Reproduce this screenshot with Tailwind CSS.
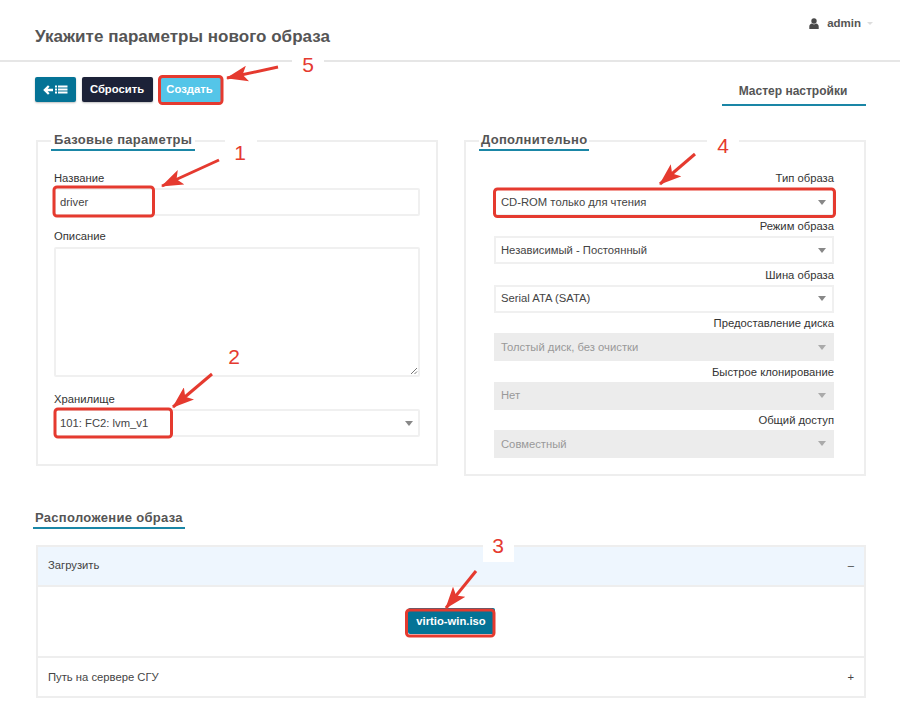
<!doctype html>
<html lang="ru">
<head>
<meta charset="UTF-8">
<title>Новый образ</title>
<script src="https://cdn.jsdelivr.net/npm/@tailwindcss/browser@4"></script>
</head>
<body class="relative h-[717px] w-[900px] overflow-hidden bg-white font-['Liberation_Sans',Arial,sans-serif] text-[11.25px] text-[#444]">
  <!-- header -->
  <header class="flex h-[62px] items-start justify-between border-b-2 border-[#e6e6e6] pl-[35px] pr-[27px]">
    <h1 class="mt-[26px] text-[17px] leading-[21px] font-bold tracking-[0.03px] text-[#555]">Укажите параметры нового образа</h1>
    <div class="mt-[16px] flex items-center text-[11.5px] leading-[14px] font-bold text-[#555]">
      <svg class="mr-[8px] h-[11px] w-[10px]" viewBox="0 0 10 11" fill="#4a4a4a"><circle cx="5" cy="3" r="2.7"/><path d="M0.3 11V8.6C0.3 6.9 1.6 5.8 3 5.6L5 6.6 7 5.6C8.4 5.8 9.7 6.9 9.7 8.6V11z"/></svg>
      admin
      <svg class="ml-[6px] h-[3px] w-[6px]" viewBox="0 0 6 3" fill="#ddd"><path d="M0 0H6L3 3z"/></svg>
    </div>
  </header>

  <!-- toolbar -->
  <div class="flex items-start justify-between pl-[35px] pr-[34px] pt-[15px]">
    <div class="flex gap-[6px] text-[11.25px] font-bold text-white">
      <button class="flex h-[25px] w-[41px] items-center justify-center rounded-[2px] bg-[#047396] shadow-[0_1px_2px_rgba(0,0,0,.25)]">
        <svg class="h-[10px] w-[25px]" viewBox="0 0 25 10" fill="#fff"><path d="M5 0.2L6.6 1.8 4.6 3.8H10V6.2H4.6L6.6 8.2 5 9.8 0.2 5z"/><path d="M12 0.5H14V2.5H12zM15 0.5H24.5V2.5H15zM12 3.5H14V5.5H12zM15 3.5H24.5V5.5H15zM12 6.5H14V8.5H12zM15 6.5H24.5V8.5H15z"/></svg>
      </button>
      <button class="h-[25px] w-[71px] rounded-[2px] bg-[#1c2238] pr-[1px] shadow-[0_1px_2px_rgba(0,0,0,.25)]">Сбросить</button>
      <button class="ml-[1px] h-[25px] w-[61px] rounded-[2px] bg-[#54c5e8] pr-[2px]">Создать</button>
    </div>
    <div class="flex h-[29px] w-[144px] items-start justify-center border-b-2 border-[#1a86a6] pt-[7px] pr-[2px] text-[12px] leading-[14px] font-bold text-[#555]">Мастер настройки</div>
  </div>

  <!-- forms -->
  <div class="mt-[24px] grid grid-cols-[402px_402px] gap-x-[26px] pl-[36px]">
    <fieldset class="self-start border-2 border-[#eeeeee] px-[16px] pb-[27px]">
      <legend class="ml-[-3px] h-[21px] border-b-2 border-[#1a86a6] bg-white px-[3px] text-[13px] leading-[20px] font-bold tracking-[0.3px] text-[#555]">Базовые параметры</legend>
      <label class="mt-[20px] block leading-[14px] text-[#333]">Название</label>
      <div class="mt-[3px] flex h-[28px] items-center rounded-[2px] border-2 border-[#f0f0f0] pl-[4px] text-[#444]">driver</div>
      <label class="mt-[13px] block leading-[14px] text-[#333]">Описание</label>
      <div class="relative mt-[4px] h-[130px] rounded-[2px] border-2 border-[#f0f0f0]">
        <svg class="absolute right-[0px] bottom-[0px] h-[8px] w-[8px]" viewBox="0 0 8 8" stroke="#777" stroke-width="1"><path d="M1 7L7 1M4.5 7L7 4.500"/></svg>
      </div>
      <label class="mt-[15px] block leading-[14px] text-[#333]">Хранилище</label>
      <div class="mt-[3px] flex h-[28px] items-center justify-between rounded-[2px] border-2 border-[#f0f0f0] pl-[4px] pr-[5px]">
        101: FC2: lvm_v1
        <svg class="h-[5px] w-[8px]" viewBox="0 0 8 5" fill="#888"><path d="M0 0H8L4 5z"/></svg>
      </div>
    </fieldset>

    <fieldset class="self-start border-2 border-[#eeeeee] pl-[28px] pr-[30px] pb-[16px]">
      <legend class="ml-[-15px] h-[21px] border-b-2 border-[#1a86a6] bg-white px-[2px] text-[13px] leading-[20px] font-bold tracking-[0.3px] text-[#555]">Дополнительно</legend>
      <div class="mt-[20px] flex flex-col gap-[3.4px]">
        <div>
          <label class="block text-right leading-[14px] text-[#333]">Тип образа</label>
          <div class="mt-[3px] flex h-[28px] items-center justify-between border-2 border-[#f0f0f0] pl-[5px] pr-[6px]">CD-ROM только для чтения <svg class="h-[5px] w-[8px]" viewBox="0 0 8 5" fill="#888"><path d="M0 0H8L4 5z"/></svg></div>
        </div>
        <div>
          <label class="block text-right leading-[14px] text-[#333]">Режим образа</label>
          <div class="mt-[3px] flex h-[28px] items-center justify-between border-2 border-[#f0f0f0] pl-[5px] pr-[6px]">Независимый - Постоянный <svg class="h-[5px] w-[8px]" viewBox="0 0 8 5" fill="#888"><path d="M0 0H8L4 5z"/></svg></div>
        </div>
        <div>
          <label class="block text-right leading-[14px] text-[#333]">Шина образа</label>
          <div class="mt-[3px] flex h-[28px] items-center justify-between border-2 border-[#f0f0f0] pl-[5px] pr-[6px]">Serial ATA (SATA) <svg class="h-[5px] w-[8px]" viewBox="0 0 8 5" fill="#888"><path d="M0 0H8L4 5z"/></svg></div>
        </div>
        <div>
          <label class="block text-right leading-[14px] text-[#333]">Предоставление диска</label>
          <div class="mt-[3px] flex h-[28px] items-center justify-between bg-[#ececec] pl-[7px] pr-[8px] text-[#999]">Толстый диск, без очистки <svg class="h-[5px] w-[8px]" viewBox="0 0 8 5" fill="#aaa"><path d="M0 0H8L4 5z"/></svg></div>
        </div>
        <div>
          <label class="block text-right leading-[14px] text-[#333]">Быстрое клонирование</label>
          <div class="mt-[3px] flex h-[28px] items-center justify-between bg-[#ececec] pl-[7px] pr-[8px] text-[#999]">Нет <svg class="h-[5px] w-[8px]" viewBox="0 0 8 5" fill="#aaa"><path d="M0 0H8L4 5z"/></svg></div>
        </div>
        <div>
          <label class="block text-right leading-[14px] text-[#333]">Общий доступ</label>
          <div class="mt-[3px] flex h-[28px] items-center justify-between bg-[#ececec] pl-[7px] pr-[8px] text-[#999]">Совместный <svg class="h-[5px] w-[8px]" viewBox="0 0 8 5" fill="#aaa"><path d="M0 0H8L4 5z"/></svg></div>
        </div>
      </div>
    </fieldset>
  </div>

  <!-- image location -->
  <section class="mt-[32px] pl-[33px] pr-[34px]">
    <h3 class="inline-block h-[21px] border-b-2 border-[#1a86a6] px-[2px] text-[13px] leading-[19px] font-bold tracking-[0.3px] text-[#555]">Расположение образа</h3>
    <div class="mt-[16px] ml-[3px] border-2 border-[#eeeeee]">
      <div class="flex h-[38px] items-center justify-between bg-[#eef6fe] px-[10px] pb-[2px]"><span>Загрузить</span><span>–</span></div>
      <div class="flex h-[73.5px] items-center justify-center border-y-2 border-[#eeeeee] pb-[1px]">
        <button class="h-[26px] w-[87px] rounded-[2px] bg-[#047396] text-[11.25px] font-bold text-white">virtio-win.iso</button>
      </div>
      <div class="flex h-[38px] items-center justify-between px-[10px]"><span>Путь на сервере СГУ</span><span>+</span></div>
    </div>
  </section>

  <!-- annotations drawn over the screenshot -->
  <svg class="pointer-events-none absolute top-0 left-0" width="900" height="717" viewBox="0 0 900 717" font-family="Liberation Sans, Arial, sans-serif" font-size="21" fill="#e53a2f" text-anchor="middle">
    <defs>
      <marker id="head" viewBox="0 0 22 16" refX="21" refY="8" markerWidth="22" markerHeight="16" markerUnits="userSpaceOnUse" orient="auto">
        <path d="M0 0L22 8 0 16 5 8z" fill="#e53a2f"/>
      </marker>
    </defs>
    <g fill="none" stroke="#e53a2f" stroke-width="3">
      <rect x="159.500" y="76.500" width="62.500" height="27" rx="3"/>
      <rect x="54" y="187" width="99.500" height="29" rx="3"/>
      <rect x="55" y="409" width="116.500" height="28" rx="3"/>
      <rect x="494.500" y="189" width="340" height="27.500" rx="3"/>
      <rect x="406.500" y="610" width="87.500" height="26" rx="3"/>
      <path d="M278 67L227 78" marker-end="url(#head)"/>
      <path d="M219 160L162 186" marker-end="url(#head)"/>
      <path d="M212 374L173 407" marker-end="url(#head)"/>
      <path d="M695 154L660 184" marker-end="url(#head)"/>
      <path d="M476 571L446 608" marker-end="url(#head)"/>
    </g>
    <g fill="#fff">
      <rect x="292" y="50" width="32" height="30"/>
      <rect x="225" y="137" width="32" height="30"/>
      <rect x="219" y="342" width="32" height="30"/>
      <rect x="707" y="131" width="32" height="30"/>
      <rect x="483" y="531" width="31" height="31"/>
    </g>
    <text x="308" y="72">5</text>
    <text x="240" y="160">1</text>
    <text x="234" y="364">2</text>
    <text x="723" y="153">4</text>
    <text x="498" y="553">3</text>
  </svg>
</body>
</html>
